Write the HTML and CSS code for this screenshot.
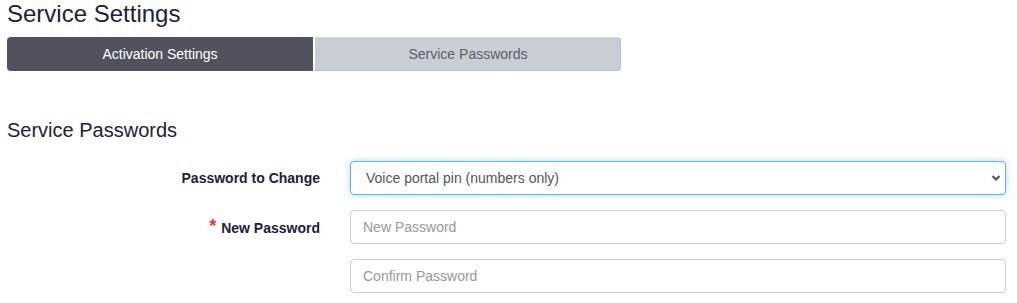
FILE: index.html
```html
<!DOCTYPE html>
<html lang="en">
<head>
    <meta charset="UTF-8">
    <meta name="viewport" content="width=device-width, initial-scale=1.0">
    <title>Service Settings</title>
    <link rel="stylesheet" href="styles.css">
</head>
<body>
    <h1 class="page-title">Service Settings</h1>
    <div class="tabs">
        <div class="tab active">Activation Settings</div>
        <div class="tab">Service Passwords</div>
    </div>

    <h2 class="section-title">Service Passwords</h2>
    <form class="pw-form">
        <label class="form-label" for="pwType">Password to Change</label>
        <div class="select-wrap">
            <select id="pwType" class="form-control focused">
                <option>Voice portal pin (numbers only)</option>
                <option>Web portal password</option>
            </select>
            <svg class="chevron" width="10" height="8" viewBox="0 0 10 8">
                <path d="M1.5 2 L5 5.5 L8.5 2" fill="none" stroke="#555" stroke-width="2.2"/>
            </svg>
        </div>

        <label class="form-label" for="newPw"><span class="req">*</span>New Password</label>
        <input type="password" id="newPw" class="form-control" placeholder="New Password">

        <div></div>
        <input type="password" id="confirmPw" class="form-control" placeholder="Confirm Password">
    </form>
</body>
</html>
```

FILE: styles.css
```css
body {
    margin: 0;
    padding: 0 11px 0 7px;
    font-family: 'Liberation Sans', Arial, sans-serif;
    color: #1c2136;
    background: #ffffff;
}

.page-title {
    margin: 0;
    font-size: 24px;
    font-weight: normal;
    line-height: 27px;
}

.tabs {
    display: flex;
    width: 614px;
    margin-top: 10px;
    height: 34px;
}

.tab {
    flex: 1;
    display: flex;
    justify-content: center;
    align-items: center;
    font-size: 14px;
    color: #5b606c;
    background-color: #c8ced4;
    border-radius: 0 4px 4px 0;
    box-shadow: inset -1px -1px 0 #b9bfc6, inset 0 1px 0 #d5dadf;
    margin-left: 2px;
}

.tab.active {
    background-color: #52525f;
    color: #ffffff;
    border-radius: 4px 0 0 4px;
    box-shadow: none;
    margin-left: 0;
}

.section-title {
    margin: 48px 0 0;
    font-size: 20px;
    font-weight: normal;
    line-height: 22px;
}

.pw-form {
    display: grid;
    grid-template-columns: 313px 656px;
    column-gap: 30px;
    row-gap: 15px;
    align-items: center;
    margin-top: 20px;
}

.form-label {
    text-align: right;
    font-size: 14px;
    font-weight: bold;
    color: #1c2136;
}

.req {
    color: #e8383d;
    font-size: 18px;
    margin-right: 5px;
    position: relative;
    top: -1px;
}

.form-control {
    box-sizing: border-box;
    width: 100%;
    height: 34px;
    padding: 6px 12px;
    font-family: 'Liberation Sans', Arial, sans-serif;
    font-size: 14px;
    color: #555555;
    background: #ffffff;
    border: 1px solid #cccccc;
    border-radius: 4px;
    outline: none;
}

.form-control::placeholder {
    color: #999999;
}

.select-wrap {
    position: relative;
}

select.form-control {
    padding-left: 15px;
    appearance: none;
    -webkit-appearance: none;
}

.form-control.focused {
    border-color: #66afe9;
    box-shadow: 0 0 6px rgba(102, 175, 233, 0.5);
}

.chevron {
    position: absolute;
    right: 5px;
    top: 13px;
}
```
